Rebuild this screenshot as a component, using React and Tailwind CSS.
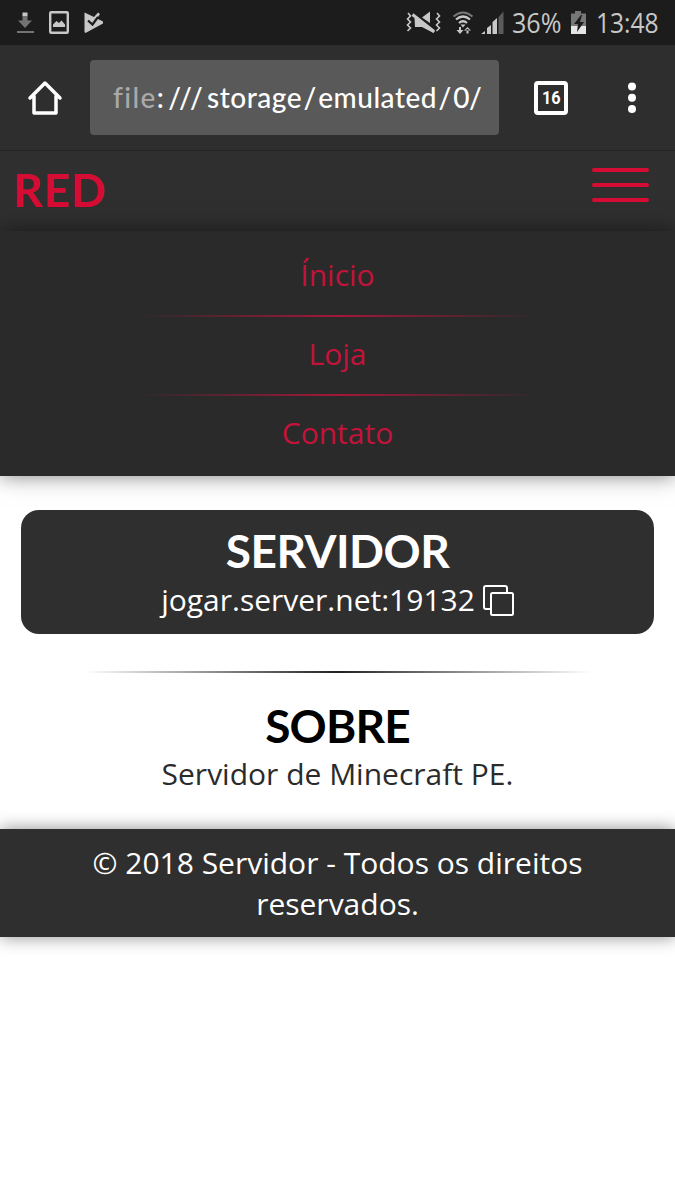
const links = ['Ínicio', 'Loja', 'Contato'];

function StatusBar() {
  return (
    <div className="flex h-[45px] items-center justify-between bg-[#1c1c1c] pr-[15px] pl-[16px] text-[#c8c8c8]">
      <svg width="90" height="45" viewBox="0 0 90 45" fill="currentColor">
        <path d="M6.500 12.500h5v4h-5z" />
        <path d="M6.500 16.500h5v4H16l-7 7.500-7-7.500h4.500zM1 31h17v2H1z" fill="#747474" />
        <rect x="34.200" y="12.200" width="17.600" height="20.600" rx="1" fill="none" stroke="currentColor" strokeWidth="2.400" />
        <path d="M37 27v-2.500l3.500-3.500 2.500 2 2.500-2.500 3.500 4V27z" />
        <path d="M68.500 12.500 78 17l4-4.500 2 1.500-3 4.500 6 3v2L69.500 33l-1-1z" />
        <path d="m72 20.500 4.500 4L82 17" fill="none" stroke="#1c1c1c" strokeWidth="2.200" />
      </svg>
      <div className="flex items-center">
        <svg width="106" height="45" viewBox="0 0 106 45" fill="none" stroke="currentColor">
          <path d="m5 13 2.500 3-3 3 3 3-3 3 3 3-3 3M34 13l2.500 3-3 3 3 3-3 3 3 3-3 3" strokeWidth="1.600" />
          <path d="m19 17.500 8-6v11.500zM11.500 17.500h3L32 31l-1.500 2L19 27h-7z" fill="currentColor" stroke="none" />
          <path d="m9.500 14.500 21.500 17" strokeWidth="3" />
          <path d="M50.500 16.500q9.500-8 19 0" stroke="#777" strokeWidth="2" />
          <path d="M53 19.500q7-6 14 0M56 23q4-3.500 8 0" strokeWidth="2.200" />
          <path d="M57.500 24.500h5L60 27.500z" fill="currentColor" stroke="none" />
          <path d="M53.500 30h7L57 34zM56 27h2v4h-2zM61 30.500h7L64.500 27zM63.500 29h2v4.500h-2z" fill="currentColor" stroke="none" />
          <path d="m78 34 4-3v3zM84 34v-6l4-3v9zM89.500 34V22l4.500-4v16z" fill="currentColor" stroke="none" />
          <path d="M95.500 34V17l5-5.500V34z" fill="#5b5b5b" stroke="none" />
        </svg>
        <span className="ml-[3px] w-[52px] origin-left scale-x-[0.93] text-[27px] leading-none whitespace-nowrap">36%</span>
        <svg className="ml-[6px]" width="17" height="45" viewBox="0 0 17 45">
          <path d="M1 13.500h4V11h6v2.500h5V26H1z" fill="#777" />
          <path d="M1 26h15v8H1z" fill="#e5e5e5" />
          <path d="m11 15-7 9h4l-1 8 7-10h-4l2-7z" fill="#1c1c1c" />
        </svg>
        <span className="ml-[9px] w-[64px] origin-left scale-x-[0.91] text-[27px] leading-none whitespace-nowrap">13:48</span>
      </div>
    </div>
  );
}

function BrowserBar() {
  return (
    <div className="flex h-[106px] items-center border-b border-[#242424] bg-[#2e2e2e] text-white">
      <svg className="ml-[27px]" width="36" height="38" viewBox="0 0 36 38" fill="none" stroke="currentColor" strokeWidth="3.500" strokeLinejoin="round" strokeLinecap="round">
        <path d="M3 19 18 4l15 15M7 17v17h22V17" />
      </svg>
      <div className="ml-[27px] h-[75px] w-[409px] rounded-[4px] bg-[#595959] pl-[23px]">
        <div className="w-[376px] overflow-hidden font-['Lato',sans-serif] text-[28px] leading-[75px] font-medium tracking-[0.500px] whitespace-nowrap">
          <span className="tracking-[1.400px] text-[#a9a9a9]">file</span>
          <span className="tracking-[4.400px]">:///</span>
          <span>storage</span>
          <span className="px-[1.500px]">/</span>
          <span>emulated</span>
          <span className="px-[1.500px]">/</span>
          <span className="tracking-[-0.500px]">0/</span>
        </div>
      </div>
      <div className="ml-[35px] flex size-[34px] items-center justify-center rounded-[4px] border-[4px] border-white font-['Roboto',sans-serif] text-[18px] leading-none font-bold">
        <span className="scale-x-[0.9]">16</span>
      </div>
      <svg className="ml-[59px]" width="10" height="32" viewBox="0 0 10 32" fill="currentColor">
        <circle cx="5" cy="4.500" r="4" />
        <circle cx="5" cy="15.800" r="4" />
        <circle cx="5" cy="27" r="4" />
      </svg>
    </div>
  );
}

function Header() {
  return (
    <header className="flex h-[80px] items-start justify-between bg-[#2f2f2f] pr-[26px] pl-[13px] text-[#d50d34]">
      <h1 className="mt-[11px] font-['Lato',sans-serif] text-[46px] leading-[55px] font-bold tracking-[0.900px]">RED</h1>
      <button className="mt-[17px] flex w-[57px] flex-col gap-[11px]" aria-label="Menu">
        <span className="h-[4px] w-full rounded-full bg-[#d50d34]" />
        <span className="h-[4px] w-full rounded-full bg-[#d50d34]" />
        <span className="h-[4px] w-full rounded-full bg-[#d50d34]" />
      </button>
    </header>
  );
}

function Menu() {
  return (
    <nav className="relative flex h-[245px] flex-col items-center bg-[#2a2a2a] pt-[23px] text-[#c4133a] shadow-[0_0_20px_rgba(0,0,0,0.5)]">
      {links.map((label, i) => (
        <div key={label} className="flex w-full flex-col items-center">
          {i > 0 && <hr className="mt-[20px] mb-[16px] h-[2px] w-[400px] border-0 bg-linear-to-r from-transparent via-[#a3173a] to-transparent" />}
          <a href="#" className="h-[41px]">{label}</a>
        </div>
      ))}
    </nav>
  );
}

export default function App() {
  return (
    <div className="min-h-[1200px] w-[675px] overflow-hidden bg-white font-['Open_Sans',sans-serif] text-[30px] leading-[41px]">
      <StatusBar />
      <BrowserBar />
      <Header />
      <Menu />
      <main className="flex h-[353px] flex-col items-center pt-[34px] text-center text-[#2b2b2b]">
        <section className="h-[123.500px] w-[633px] rounded-[18px] bg-[#2f2f2f] pt-[13px] text-white">
          <h2 className="h-[56px] font-['Lato',sans-serif] text-[46px] leading-[55px] font-bold tracking-[-0.500px]">SERVIDOR</h2>
          <div className="flex items-center justify-center gap-[8px]">
            <span>jogar.server.net:19132</span>
            <svg className="mt-[2px]" width="31" height="31" viewBox="0 0 31 31" fill="none" stroke="currentColor" strokeWidth="2">
              <rect x="8" y="8" width="22" height="22" rx="1.500" />
              <path d="M8 24H3a2 2 0 0 1-2-2V3a2 2 0 0 1 2-2h19a2 2 0 0 1 2 2v5" />
            </svg>
          </div>
        </section>
        <hr className="mt-[37.500px] h-[2px] w-[506px] border-0 bg-linear-to-r from-transparent via-[#202020] to-transparent" />
        <h2 className="mt-[25px] h-[55px] font-['Lato',sans-serif] text-[46px] leading-[55px] font-bold tracking-[-0.800px] text-black">SOBRE</h2>
        <p>Servidor de Minecraft PE.</p>
      </main>
      <footer className="h-[108px] bg-[#2f2f2f] px-[60px] pt-[13px] text-center text-white shadow-[0_0_16px_rgba(0,0,0,0.45)]">
        © 2018 Servidor - Todos os direitos reservados.
      </footer>
    </div>
  );
}
